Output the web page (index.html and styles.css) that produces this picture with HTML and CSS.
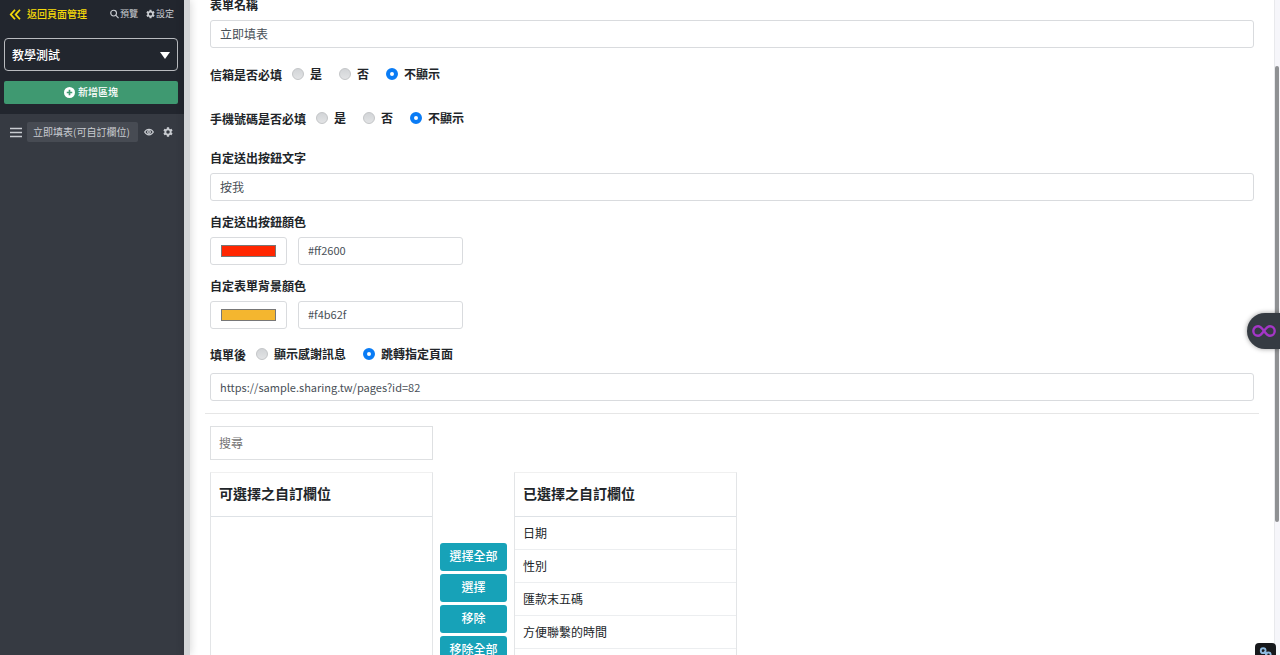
FILE: index.html
```html
<!DOCTYPE html>
<html lang="zh-Hant">
<head>
<meta charset="utf-8">
<title>表單設定</title>
<link rel="stylesheet" href="styles.css">
</head>
<body>
<svg class="defs" aria-hidden="true">
  <symbol id="gear" viewBox="0 0 16 16"><path fill="currentColor" fill-rule="evenodd" d="M6.3 0.5h3.4l.4 2.2 1.3.8 2.2-.8 1.7 3-1.7 1.5v1.6l1.7 1.5-1.7 3-2.2-.8-1.3.8-.4 2.2H6.3l-.4-2.2-1.3-.8-2.2.8-1.7-3 1.7-1.5V7.2L.7 5.7l1.7-3 2.2.8 1.3-.8zM8 5.2a2.8 2.8 0 1 0 0 5.6 2.8 2.8 0 0 0 0-5.6z"/></symbol>
</svg>
<div class="app">
  <aside class="sidebar">
    <header class="side-head">
      <nav class="side-nav">
        <a class="back" href="#"><svg class="icon-back" viewBox="0 0 12 12" fill="none" stroke="currentColor" stroke-width="2"><path d="M6 .8L1.4 6 6 11.2M11.4.8L6.8 6l4.6 5.2"/></svg>返回頁面管理</a>
        <a class="tool" href="#"><svg class="icon" viewBox="0 0 10 10" fill="none" stroke="currentColor" stroke-width="1.3"><circle cx="4" cy="4" r="3.2"/><path d="M6.3 6.3L9.5 9.5"/></svg>預覽</a>
        <a class="tool" href="#"><svg class="icon"><use href="#gear"/></svg>設定</a>
      </nav>
      <div class="picker">
        <select class="page-select" aria-label="頁面"><option>教學測試</option></select>
      </div>
      <button class="add" type="button"><svg class="icon-add" viewBox="0 0 12 12"><circle cx="6" cy="6" r="6" fill="currentColor"/><path d="M6 3v6M3 6h6" stroke="#3f9971" stroke-width="1.8"/></svg><span>新增區塊</span></button>
    </header>
    <div class="block">
      <svg class="icon-drag" viewBox="0 0 12 11" stroke="currentColor" stroke-width="1.3"><path d="M0 1.5h12M0 5.5h12M0 9.5h12"/></svg>
      <span class="block-name">立即填表(可自訂欄位)</span>
      <button class="icon-btn" type="button" aria-label="顯示"><svg class="icon" viewBox="0 0 12 10" fill="none" stroke="currentColor" stroke-width="1.5"><path d="M.8 5C3.2.6 8.8.6 11.2 5 8.8 9.4 3.2 9.4.8 5z"/><circle cx="6" cy="5" r="1.6"/></svg></button>
      <button class="icon-btn" type="button" aria-label="設定區塊"><svg class="icon"><use href="#gear"/></svg></button>
    </div>
  </aside>
  <div class="gutter"></div>
  <main class="main">
    <form class="form">
      <div class="field">
        <label for="name">表單名稱</label>
        <input class="text" id="name" value="立即填表">
      </div>
      <fieldset class="choices mail">
        <legend>信箱是否必填</legend>
        <label><input type="radio" name="mail">是</label>
        <label><input type="radio" name="mail">否</label>
        <label><input type="radio" name="mail" checked>不顯示</label>
      </fieldset>
      <fieldset class="choices phone">
        <legend>手機號碼是否必填</legend>
        <label><input type="radio" name="phone">是</label>
        <label><input type="radio" name="phone">否</label>
        <label><input type="radio" name="phone" checked>不顯示</label>
      </fieldset>
      <div class="field">
        <label for="send">自定送出按鈕文字</label>
        <input class="text" id="send" value="按我">
      </div>
      <div class="field">
        <label for="btn-color">自定送出按鈕顏色</label>
        <div class="color-row">
          <input class="swatch" type="color" id="btn-color" value="#ff2600">
          <input class="text code" aria-label="按鈕色碼" value="#ff2600">
        </div>
      </div>
      <div class="field">
        <label for="bg-color">自定表單背景顏色</label>
        <div class="color-row">
          <input class="swatch" type="color" id="bg-color" value="#f4b62f">
          <input class="text code" aria-label="背景色碼" value="#f4b62f">
        </div>
      </div>
      <div class="after">
        <fieldset class="choices">
          <legend>填單後</legend>
          <label><input type="radio" name="after">顯示感謝訊息</label>
          <label><input type="radio" name="after" checked>跳轉指定頁面</label>
        </fieldset>
        <input class="text" aria-label="指定頁面網址" value="https://sample.sharing.tw/pages?id=82">
      </div>
    </form>
    <section class="transfer">
      <input class="search" type="search" placeholder="搜尋" aria-label="搜尋">
      <div class="lists">
        <div class="list">
          <table><thead><tr><th>可選擇之自訂欄位</th></tr></thead></table>
        </div>
        <div class="moves">
          <button type="button">選擇全部</button>
          <button type="button">選擇</button>
          <button type="button">移除</button>
          <button type="button">移除全部</button>
        </div>
        <div class="list">
          <table>
            <thead><tr><th>已選擇之自訂欄位</th></tr></thead>
            <tbody>
              <tr><td>日期</td></tr>
              <tr><td>性別</td></tr>
              <tr><td>匯款末五碼</td></tr>
              <tr><td>方便聯繫的時間</td></tr>
            </tbody>
          </table>
        </div>
      </div>
    </section>
  </main>
  <div class="track"><div class="thumb"></div></div>
</div>
<button class="float-tab" type="button" aria-label="工具"><svg viewBox="0 0 24 14" fill="none" stroke="#a436c6" stroke-width="2.4"><path d="M12 7C9.500 3.500 8 2.300 6 2.300a4.700 4.700 0 0 0 0 9.400c2 0 3.500-1.200 6-4.700s4-4.700 6-4.700a4.700 4.700 0 0 1 0 9.400c-2 0-3.500-1.200-6-4.700z"/></svg></button>
<button class="link-tab" type="button" aria-label="連結"><svg viewBox="0 0 14 14" fill="none" stroke="#8fbbe0" stroke-width="2"><circle cx="4.500" cy="4" r="2.600"/><circle cx="10" cy="8.500" r="2.600"/><path d="M5 5l4 3"/></svg></button>
</body>
</html>
```
FILE: styles.css
```css
* { box-sizing: border-box; }
body {
  margin: 0;
  color: #212529;
  background: #fff;
  font: 12px/18px "Noto Sans CJK TC", sans-serif;
  overflow: hidden;
}
button, input, select { font: inherit; }
button { border: 0; padding: 0; }
.defs { position: absolute; width: 0; height: 0; }
.app { display: flex; height: 100vh; }

.sidebar { flex: none; width: 184px; background: #363a42; color: #c9ccd1; }
.side-head { padding: 4px 6px 10px 4px; background: #22262e; }
.side-nav { display: flex; align-items: center; gap: 8px; padding: 0 4px 0 5px; height: 20px; }
.side-nav a { display: flex; align-items: center; color: inherit; text-decoration: none; }
.side-nav .back { gap: 6px; margin-right: auto; color: #f5d90a; font-size: 10px; font-weight: 500; }
.side-nav .tool { gap: 1px; font-size: 9px; }
.icon { width: 10px; height: 10px; }
.side-nav .icon { width: 9px; }
.icon-back { width: 12px; height: 11px; }
.picker { position: relative; margin-top: 14px; }
.page-select {
  appearance: none;
  display: block;
  width: 100%;
  height: 33px;
  padding: 0 7px;
  border: 1px solid #b9bbbf;
  border-radius: 4px;
  background: #22262e;
  color: #fff;
  font-weight: 500;
}
.picker::after {
  content: "";
  position: absolute;
  right: 8px;
  top: 14px;
  border: 5px solid transparent;
  border-top: 7px solid #fff;
  border-bottom: 0;
  pointer-events: none;
}
.add {
  display: flex;
  align-items: center;
  justify-content: center;
  gap: 3px;
  width: 100%;
  height: 23px;
  margin-top: 10px;
  border-radius: 2px;
  background: #3f9971;
  color: #fff;
  font-size: 10px;
  font-weight: 500;
}
.add span { padding-bottom: 2px; }
.icon-add { width: 11px; height: 11px; }
.block { display: flex; align-items: center; padding: 8px 10px; }
.icon-drag { width: 12px; height: 11px; }
.block-name {
  margin: 0 6px 0 5px;
  padding: 1px 8px 1px 6px;
  border-radius: 2px;
  background: #474b53;
  font-size: 10px;
  white-space: nowrap;
}
.icon-btn { display: flex; background: none; color: inherit; }
.icon-btn + .icon-btn { margin-left: 9px; }

.gutter { flex: none; width: 6px; background: #d3d5d7; box-shadow: 0 0 8px #0003; z-index: 1; }
.main { flex: 1; min-width: 0; padding: 0 15px; overflow: hidden; }
.form { margin-top: -4px; padding: 0 5px 12px; border-bottom: 1px solid #e6e6e6; }
.field { margin-bottom: 12px; }
.field > label { display: block; margin-bottom: 6px; font-weight: 700; }
.text {
  display: block;
  width: 100%;
  height: 28px;
  padding: 0 9px 2px;
  border: 1px solid #d9dbde;
  border-radius: 3px;
  background: #fff;
  color: #495057;
}
.choices { display: flex; align-items: center; height: 20px; margin: 0; padding: 0; border: 0; font-weight: 700; }
.choices legend { float: left; padding: 2px 0 0; margin-right: 10px; }
.choices label { display: flex; align-items: center; gap: 6px; margin-right: 17px; }
.choices input {
  appearance: none;
  width: 12px;
  height: 12px;
  margin: 0;
  border: 1px solid #c3c5c7;
  border-radius: 50%;
  background: linear-gradient(#d2d4d7, #e2e3e5);
}
.choices input:checked { border: 4px solid #0a7cf5; background: #fff; }
.mail { margin: 16px 0 24px; }
.phone { margin-bottom: 21px; }
.color-row { display: flex; gap: 11px; }
.swatch { width: 77px; height: 28px; padding: 3px 8px; border: 1px solid #d9dbde; border-radius: 3px; background: #fff; }
.text.code { width: 165px; font-size: 11px; }
.after { margin-top: 15px; }
.after .text { margin-top: 9px; padding-bottom: 0; font-size: 11px; }

.transfer { padding: 12px 5px; }
.search {
  appearance: none;
  display: block;
  width: 223px;
  height: 34px;
  padding: 0 8px 2px;
  border: 1px solid #dee0e2;
}
.search::placeholder { color: #757575; }
.lists { display: flex; gap: 7px; margin-top: 12px; }
.list { width: 223px; min-height: 300px; border: 1px solid #e3e5e7; border-top-color: #f0f0f0; }
.list table { width: 100%; border-spacing: 0; }
.list th { height: 44px; padding: 0 8px 4px; border-bottom: 1px solid #dee2e6; font-size: 14px; font-weight: 700; text-align: left; }
.list td { height: 33px; padding: 0 8px; border-bottom: 1px solid #eceef0; }
.moves { display: flex; flex-direction: column; gap: 3px; width: 67px; padding-top: 71px; }
.moves button { height: 28px; padding-bottom: 2px; border-radius: 3px; background: #17a2b8; color: #fff; font-weight: 500; }

.track { flex: none; width: 6px; padding-top: 66px; border-left: 1px solid #e8e9ec; background: #f6f6fa; }
.thumb { width: 4px; height: 77.5%; border-radius: 3px; background: #8f9193; }
.float-tab {
  position: fixed;
  right: 0;
  top: 313px;
  width: 33px;
  height: 36px;
  padding: 0 4px 0 5px;
  border-radius: 18px 0 0 18px;
  background: #353b42;
  box-shadow: 0 0 5px #0006;
}
.float-tab svg { display: block; width: 24px; }
.link-tab { position: fixed; right: 4px; bottom: -8px; width: 21px; height: 20px; padding: 4px; border-radius: 4px; background: #17191c; }
.link-tab svg { display: block; width: 13px; }
```
